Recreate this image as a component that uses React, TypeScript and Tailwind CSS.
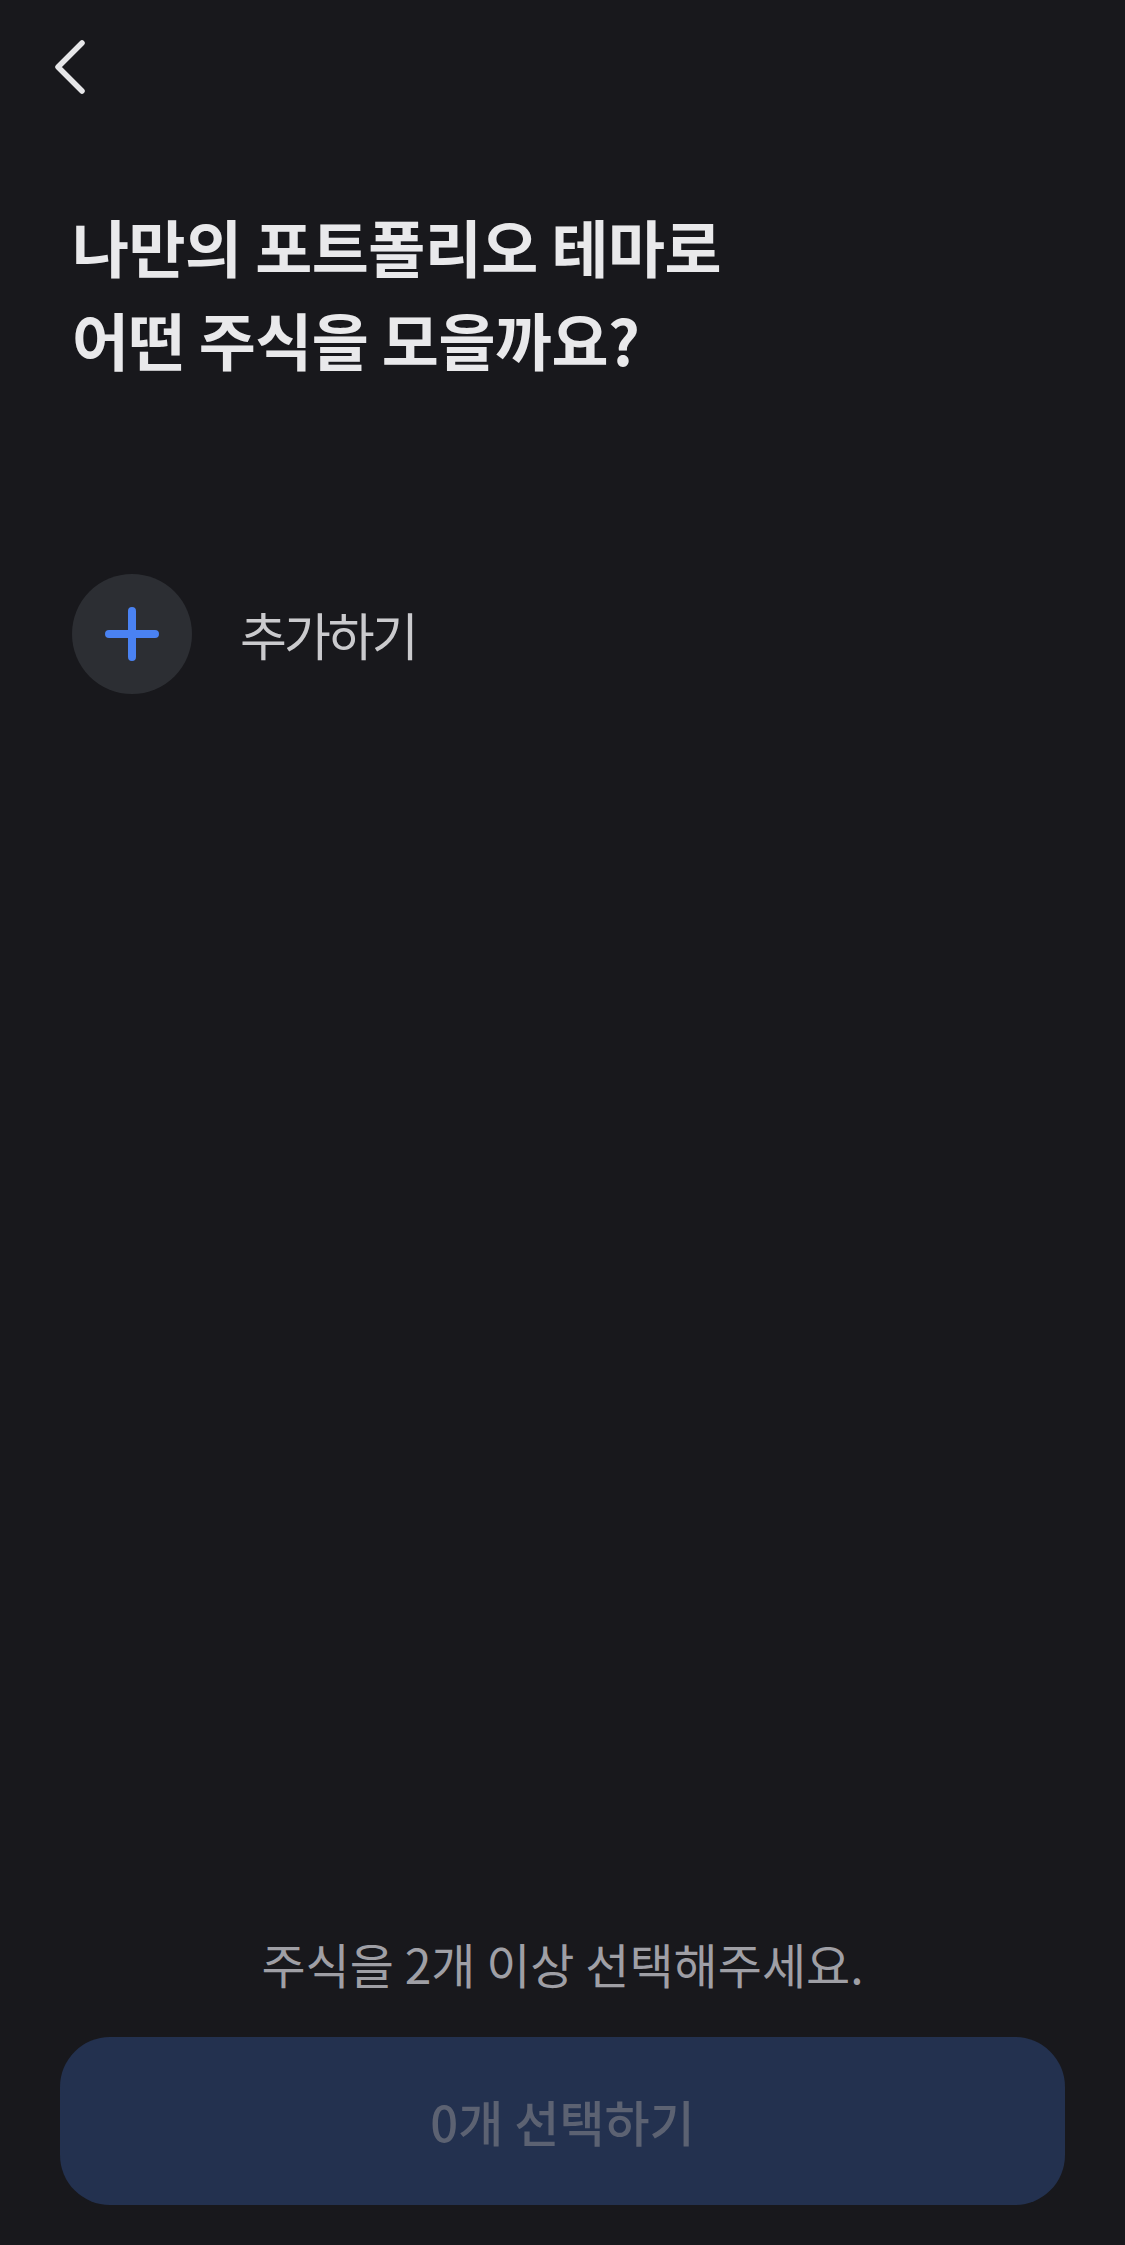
const kr = "font-['Noto_Sans_CJK_KR',sans-serif]"

function BackIcon() {
  return (
    <svg width="40" height="60" viewBox="0 0 40 60" fill="none">
      <polyline points="32,6 8,30 32,54" stroke="#e6e6e8" strokeWidth="5.5" strokeLinecap="round" strokeLinejoin="round" />
    </svg>
  )
}

function PlusIcon() {
  return (
    <svg width="54" height="54" viewBox="0 0 54 54" fill="none">
      <path d="M27 4v46M4 27h46" stroke="#4a82f2" strokeWidth="8" strokeLinecap="round" />
    </svg>
  )
}

export default function App() {
  const selected = 0

  return (
    <div className={`${kr} flex flex-col h-screen bg-[#18181c]`}>
      {/* header */}
      <div className="pl-[50px] pt-[37px]">
        <button type="button" className="block">
          <BackIcon />
        </button>
      </div>

      <h1 className="mt-[103px] pl-[72px] text-[62px] leading-[93px] font-bold tracking-[-0.5px] text-[#e9e9eb]">
        나만의 포트폴리오 테마로
        <br />
        어떤 주식을 모을까요?
      </h1>

      <div className="mt-[188px] pl-[72px] flex items-center gap-[48px]">
        <div className="w-[120px] h-[120px] rounded-full bg-[#2c2e33] flex items-center justify-center">
          <PlusIcon />
        </div>
        <span className="text-[51px] tracking-[-3px] text-[#cacacd]">추가하기</span>
      </div>

      <div className="flex-1" />

      <p className="text-center text-[48px] text-[#9f9fa5]">주식을 2개 이상 선택해주세요.</p>

      <div className="px-[60px] pt-[38px] pb-[40px]">
        <button type="button" disabled className="w-full h-[168px] rounded-[50px] bg-[#23314f] text-[49px] font-medium text-[#5c6272]">
          {selected}개 선택하기
        </button>
      </div>
    </div>
  )
}
